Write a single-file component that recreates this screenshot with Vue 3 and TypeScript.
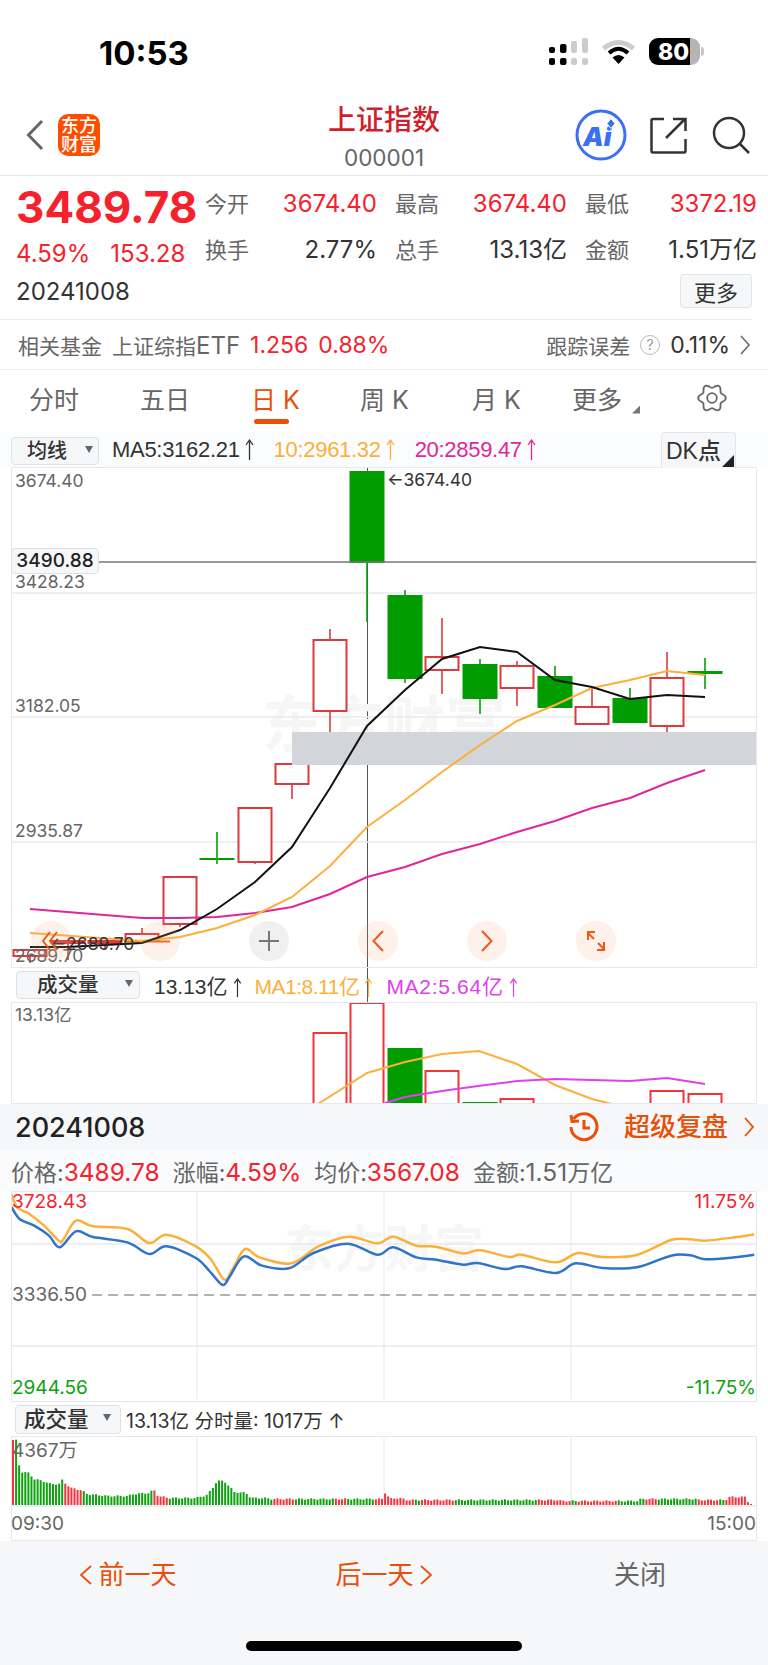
<template>
  <div class="page">
    <!-- Status bar -->
    <div class="status">
      <span class="clock">10:53</span>
      <div class="status-icons">
        <svg class="signal" width="39" height="27" viewBox="0 0 39 27">
          <rect x="0" y="9" width="6" height="6" rx="2" fill="#000" />
          <rect x="0" y="20" width="6" height="7" rx="2" fill="#000" />
          <rect x="11" y="6" width="6.5" height="9" rx="2" fill="#000" />
          <rect x="11" y="20" width="6.5" height="7" rx="2" fill="#000" />
          <rect x="22" y="3" width="6" height="12" rx="2" fill="#ccc" />
          <rect x="22" y="20" width="6" height="7" rx="2" fill="#ccc" />
          <rect x="33" y="0" width="6" height="15" rx="2" fill="#ccc" />
          <rect x="33" y="20" width="6" height="7" rx="2" fill="#ccc" />
        </svg>
        <svg class="wifi" width="35" height="25" viewBox="0 0 35 25">
          <path d="M2.5 9.5 Q17.5 -2.5 32.5 9.5" fill="none" stroke="#ccc" stroke-width="5" />
          <path d="M8 14 Q17.5 5.5 27 14" fill="none" stroke="#000" stroke-width="4" />
          <path d="M11.5 18.5 Q17.5 13.5 23.5 18.5 L17.5 25 Z" fill="#000" />
        </svg>
        <div class="battery"><span>80</span></div>
      </div>
    </div>

    <!-- Navigation -->
    <header class="nav">
      <div class="nav-left">
        <svg width="18" height="32" viewBox="0 0 18 32">
          <path d="M16 2 L2.5 16 L16 30" fill="none" stroke="#666" stroke-width="3" />
        </svg>
        <div class="logo">东方<br />财富</div>
      </div>
      <div class="nav-title">
        <h1>上证指数</h1>
        <span>000001</span>
      </div>
      <div class="nav-right">
        <svg class="ai-icon" width="52" height="52" viewBox="0 0 52 52">
          <circle cx="26" cy="26" r="24" fill="#fff" stroke="#3b6ff5" stroke-width="3" />
          <text x="8" y="37" class="ai-text">Ai</text>
          <path d="M36 9.5 L40 14.5 L36 19.5 L32 14.5 Z" fill="#3b6ff5" stroke="#fff" stroke-width="1" />
        </svg>
        <svg width="37" height="37" viewBox="0 0 37 37">
          <path d="M14 2 H3 a1.5 1.5 0 0 0 -1.5 1.5 V34 a1.5 1.5 0 0 0 1.5 1.5 H34 a1.5 1.5 0 0 0 1.5 -1.5 V22" fill="none" stroke="#333" stroke-width="2.5" />
          <path d="M16 21 L35 2 M23 2 H35.5 V14" fill="none" stroke="#333" stroke-width="2.5" />
        </svg>
        <svg width="38" height="38" viewBox="0 0 38 38">
          <circle cx="17" cy="17" r="15" fill="none" stroke="#333" stroke-width="2.5" />
          <path d="M28 28 L37 37" stroke="#333" stroke-width="2.5" />
        </svg>
      </div>
    </header>

    <!-- Quote -->
    <section class="quote">
      <div class="quote-main">
        <div class="quote-left">
          <div class="price">3489.78</div>
          <div class="change"><span>4.59%</span><span>153.28</span></div>
        </div>
        <div class="quote-grid">
          <div v-for="c in stats" :key="c.label" class="stat">
            <span class="stat-label">{{ c.label }}</span>
            <span class="stat-value" :class="{ red: c.red }">{{ c.value }}</span>
          </div>
        </div>
      </div>
      <div class="quote-date">
        <span>20241008</span>
        <button type="button" class="more-btn">更多</button>
      </div>
    </section>

    <div class="fund">
      <span class="fund-label">相关基金</span>
      <span class="fund-name">上证综指<i>ETF</i></span>
      <span class="fund-num red">1.256</span>
      <span class="fund-num red">0.88%</span>
      <span class="fund-err">跟踪误差</span>
      <span class="help">?</span>
      <span class="fund-num fund-val">0.11%</span>
      <svg width="10" height="20" viewBox="0 0 10 20">
        <path d="M1 1 L9 10 L1 19" fill="none" stroke="#666" stroke-width="1.5" />
      </svg>
    </div>

    <!-- Tabs -->
    <nav class="tabs">
      <span v-for="t in tabs" :key="t" class="tab" :class="{ active: t === '日 K' }">{{ t }}</span>
      <span class="tab tab-more">更多<i class="corner"></i></span>
      <svg class="gear" width="30" height="30" viewBox="0 0 30 30">
        <path :d="gearPath" fill="none" stroke="#666" stroke-width="1.8" />
        <circle cx="15" cy="15" r="4.8" fill="none" stroke="#666" stroke-width="1.8" />
      </svg>
    </nav>

    <div class="ma-row">
      <div class="select select-ma">均线<i class="tri"></i></div>
      <span class="ma-text ma-first">MA5:3162.21<svg class="arr" width="9" height="22" viewBox="0 0 9 22"><path d="M4.5 1 V21 M1 6 L4.5 1 L8 6" /></svg></span>
      <span class="ma-text orange">10:2961.32<svg class="arr" width="9" height="22" viewBox="0 0 9 22"><path d="M4.5 1 V21 M1 6 L4.5 1 L8 6" /></svg></span>
      <span class="ma-text pink">20:2859.47<svg class="arr" width="9" height="22" viewBox="0 0 9 22"><path d="M4.5 1 V21 M1 6 L4.5 1 L8 6" /></svg></span>
      <div class="dk">DK点<i class="corner dark"></i></div>
    </div>

    <!-- K line + volume -->
    <div class="kline">
      <div class="crosshair"></div>

      <div class="chart chart-main">
        <svg width="746" height="501" viewBox="11 467 746 501">
          <text x="262" y="747" class="watermark wm-big">东方财富</text>
          <path d="M11 593 H757 M11 717 H757 M11 842 H757" stroke="#e8ebf0" stroke-width="1.5" />

          <g v-for="k in candles" :key="k.x">
            <line
              :x1="k.x" :x2="k.x" :y1="k.high" :y2="k.low"
              :stroke="k.up ? '#dc3a3e' : '#0a9c0a'" stroke-width="1.6"
            />
            <rect
              v-if="k.up"
              :x="k.x - 16.5" :y="k.top" width="33" :height="k.bottom - k.top"
              fill="#fff" stroke="#dc3a3e" stroke-width="2"
            />
            <rect
              v-else
              :x="k.x - 17.5" :y="k.top" width="35" :height="k.bottom - k.top"
              fill="#009c00"
            />
          </g>
          <path d="M125 941.5 H170" stroke="#f0601e" stroke-width="2" />

          <rect x="292" y="732" width="465" height="33" fill="#d2d5da" />
          <path d="M99 562 H757" stroke="#777" stroke-width="1.5" />

          <polyline :points="ma20" fill="none" stroke="#e0269a" stroke-width="2" />
          <polyline :points="ma10" fill="none" stroke="#fbb03b" stroke-width="2" />
          <polyline :points="ma5" fill="none" stroke="#111" stroke-width="2" />

          <text x="15" y="487" class="axis">3674.40</text>
          <text x="15" y="588" class="axis">3428.23</text>
          <text x="15" y="712" class="axis">3182.05</text>
          <text x="15" y="837" class="axis">2935.87</text>
          <text x="15" y="962" class="axis">2689.70</text>
          <text x="387" y="486" class="axis dark">←3674.40</text>
          <text x="50" y="950" class="axis dark">←2689.70</text>
        </svg>

        <div class="cross-price">3490.88</div>

        <div class="chart-tools">
          <span class="tool">
            <svg width="20" height="20" viewBox="0 0 20 20">
              <path d="M9 1 L2 10 L9 19 M16 1 L9 10 L16 19" fill="none" stroke="#ee5a14" stroke-width="2" />
            </svg>
          </span>
          <span class="tool">
            <svg width="20" height="20" viewBox="0 0 20 20"></svg>
          </span>
          <span class="tool gray">
            <svg width="20" height="20" viewBox="0 0 20 20">
              <path d="M10 0 V20 M0 10 H20" stroke="#777" stroke-width="2" />
            </svg>
          </span>
          <span class="tool">
            <svg width="12" height="22" viewBox="0 0 12 22">
              <path d="M11 1 L1.5 11 L11 21" fill="none" stroke="#ee5a14" stroke-width="2" />
            </svg>
          </span>
          <span class="tool">
            <svg width="12" height="22" viewBox="0 0 12 22">
              <path d="M1 1 L10.5 11 L1 21" fill="none" stroke="#ee5a14" stroke-width="2" />
            </svg>
          </span>
          <span class="tool">
            <svg width="22" height="22" viewBox="0 0 22 22">
              <path d="M3 10 V2 H10 M2.5 2.5 L9 9 M19 12 V20 H12 M19.5 19.5 L13 13" fill="none" stroke="#ee5a14" stroke-width="2" />
            </svg>
          </span>
        </div>
      </div>

      <div class="vol-row">
        <div class="select select-vol">成交量<i class="tri"></i></div>
        <span class="vol-text">13.13亿<svg class="arr" width="9" height="20" viewBox="0 0 9 22"><path d="M4.5 1 V21 M1 6 L4.5 1 L8 6" /></svg></span>
        <span class="vol-text orange ma1">MA1:8.11亿<svg class="arr" width="9" height="20" viewBox="0 0 9 22"><path d="M4.5 1 V21 M1 6 L4.5 1 L8 6" /></svg></span>
        <span class="vol-text violet ma2">MA2:5.64亿<svg class="arr" width="9" height="20" viewBox="0 0 9 22"><path d="M4.5 1 V21 M1 6 L4.5 1 L8 6" /></svg></span>
      </div>

      <div class="chart chart-vol">
        <svg width="746" height="102" viewBox="11 1002 746 102">
          <g v-for="b in volBars" :key="b.x">
            <rect
              v-if="b.up"
              :x="b.x - 16.5" :y="b.top" width="33" height="120"
              fill="#fff" stroke="#f0353b" stroke-width="2"
            />
            <rect
              v-else
              :x="b.x - 17.5" :y="b.top" width="35" height="120"
              fill="#009c00"
            />
          </g>
          <polyline :points="volMa1" fill="none" stroke="#fbb03b" stroke-width="2" />
          <polyline :points="volMa2" fill="none" stroke="#e040e8" stroke-width="2" />
          <text x="15" y="1021" class="axis">13.13亿</text>
        </svg>
      </div>
    </div>

    <!-- Replay bar -->
    <div class="replay">
      <span class="replay-date">20241008</span>
      <div class="replay-link">
        <svg width="30" height="30" viewBox="0 0 30 30">
          <path d="M4.5 7 A13 13 0 1 1 2 15" fill="none" stroke="#e8500a" stroke-width="3" />
          <path d="M2 3 L3 9.5 L10 9" fill="none" stroke="#e8500a" stroke-width="3" />
          <path d="M15 8 V16 H21" fill="none" stroke="#e8500a" stroke-width="3" />
        </svg>
        <span>超级复盘</span>
        <svg width="10" height="20" viewBox="0 0 10 20">
          <path d="M1 1 L9 10 L1 19" fill="none" stroke="#e8500a" stroke-width="1.8" />
        </svg>
      </div>
    </div>

    <div class="info">
      <span>价格:<em class="up">3489.78</em></span>
      <span>涨幅:<em class="up">4.59%</em></span>
      <span>均价:<em class="up">3567.08</em></span>
      <span>金额:<em>1.51</em>万亿</span>
    </div>

    <!-- Time share -->
    <div class="chart chart-time">
      <svg width="746" height="210" viewBox="11 1192 746 210">
        <text x="284" y="1268" class="watermark wm-small">东方财富</text>
        <path d="M197 1192 V1400 M384 1192 V1400 M571 1192 V1400" stroke="#e3e7ee" stroke-width="1" />
        <path d="M11 1245 H757 M11 1347 H757" stroke="#e6e9f0" stroke-width="1.5" />
        <path d="M92 1296 H757" stroke="#999" stroke-width="1.5" stroke-dasharray="10 6" />
        <path :d="avgLine" fill="none" stroke="#fbb03b" stroke-width="2.5" />
        <path :d="priceLine" fill="none" stroke="#2f74c8" stroke-width="2.5" />
        <text x="12" y="1209" class="axis big red-fill">3728.43</text>
        <text x="756" y="1209" class="axis big red-fill end">11.75%</text>
        <text x="12" y="1302" class="axis big">3336.50</text>
        <text x="12" y="1395" class="axis big green-fill">2944.56</text>
        <text x="756" y="1395" class="axis big green-fill end">-11.75%</text>
      </svg>
    </div>

    <div class="vol2-row">
      <div class="select select-vol2">成交量<i class="tri"></i></div>
      <span>13.13亿 分时量: 1017万 ↑</span>
    </div>

    <div class="chart chart-bars">
      <svg width="746" height="104" viewBox="11 1436 746 104">
        <path d="M197 1438 V1505 M384 1438 V1505 M571 1438 V1505" stroke="#e3e7ee" stroke-width="1" />
        <rect
          v-for="b in minuteBars"
          :key="b.x"
          :x="b.x" :y="1505 - b.h" width="2" :height="b.h"
          :fill="b.up ? '#f5333f' : '#0ea20e'"
        />
        <path d="M11 1506 H757" stroke="#e6e9f0" stroke-width="1.5" />
        <text x="12" y="1457" class="axis big">4367万</text>
        <text x="11" y="1530" class="axis big">09:30</text>
        <text x="756" y="1530" class="axis big end">15:00</text>
      </svg>
    </div>

    <!-- Footer -->
    <footer class="footer">
      <div class="footer-btns">
        <span class="foot-btn">
          <svg width="13" height="20" viewBox="0 0 13 20">
            <path d="M12 1 L2 10 L12 19" fill="none" stroke="#e8500a" stroke-width="1.8" />
          </svg>
          前一天
        </span>
        <span class="foot-btn">
          后一天
          <svg width="13" height="20" viewBox="0 0 13 20">
            <path d="M1 1 L11 10 L1 19" fill="none" stroke="#e8500a" stroke-width="1.8" />
          </svg>
        </span>
        <span class="foot-btn close">关闭</span>
      </div>
      <div class="home"></div>
    </footer>
  </div>
</template>

<script setup lang="ts">
interface Stat {
  label: string
  value: string
  red?: boolean
}

interface Candle {
  x: number
  top: number
  bottom: number
  high: number
  low: number
  up: boolean
}

type Pt = [number, number]

const stats: Stat[] = [
  { label: '今开', value: '3674.40', red: true },
  { label: '最高', value: '3674.40', red: true },
  { label: '最低', value: '3372.19', red: true },
  { label: '换手', value: '2.77%' },
  { label: '总手', value: '13.13亿' },
  { label: '金额', value: '1.51万亿' },
]

const tabs = ['分时', '五日', '日 K', '周 K', '月 K']

const candles: Candle[] = [
  { x: 30, top: 950, bottom: 956, high: 950, low: 963, up: true },
  { x: 68, top: 941, bottom: 943, high: 941, low: 960, up: true },
  { x: 105, top: 941, bottom: 943, high: 941, low: 950, up: true },
  { x: 142, top: 934, bottom: 941, high: 928, low: 941, up: true },
  { x: 180, top: 877, bottom: 924, high: 877, low: 927, up: true },
  { x: 217, top: 858, bottom: 860, high: 832, low: 864, up: false },
  { x: 255, top: 808, bottom: 862, high: 808, low: 864, up: true },
  { x: 292, top: 764, bottom: 784, high: 764, low: 799, up: true },
  { x: 330, top: 640, bottom: 711, high: 629, low: 732, up: true },
  { x: 367, top: 471, bottom: 563, high: 471, low: 622, up: false },
  { x: 405, top: 595, bottom: 679, high: 590, low: 683, up: false },
  { x: 442, top: 657, bottom: 670, high: 618, low: 694, up: true },
  { x: 480, top: 664, bottom: 699, high: 659, low: 714, up: false },
  { x: 517, top: 666, bottom: 688, high: 661, low: 706, up: true },
  { x: 555, top: 676, bottom: 708, high: 666, low: 708, up: false },
  { x: 592, top: 707, bottom: 724, high: 687, low: 724, up: true },
  { x: 630, top: 698, bottom: 723, high: 688, low: 723, up: false },
  { x: 667, top: 678, bottom: 726, high: 652, low: 732, up: true },
  { x: 705, top: 671, bottom: 674, high: 658, low: 689, up: false },
]

const volBars = [
  { x: 330, top: 1033, up: true },
  { x: 367, top: 1003, up: true },
  { x: 405, top: 1048, up: false },
  { x: 442, top: 1071, up: true },
  { x: 480, top: 1102, up: false },
  { x: 517, top: 1099, up: true },
  { x: 667, top: 1091, up: true },
  { x: 705, top: 1094, up: true },
]

function toPoints(pts: Pt[]): string {
  return pts.map(p => p.join(',')).join(' ')
}

const ma5 = toPoints([
  [30, 947], [67, 947], [105, 945], [142, 943], [180, 930], [217, 909], [255, 882],
  [292, 847], [330, 788], [367, 726], [405, 690], [442, 659], [480, 647], [517, 652],
  [555, 680], [592, 687], [630, 699], [667, 695], [705, 697],
])

const ma10 = toPoints([
  [30, 933], [142, 941], [180, 937], [217, 928], [255, 915], [292, 897], [330, 866],
  [367, 827], [405, 800], [442, 772], [480, 745], [517, 721], [555, 705], [592, 688],
  [630, 680], [667, 671], [705, 675],
])

const ma20 = toPoints([
  [30, 909], [142, 918], [180, 918], [217, 917], [255, 913], [292, 907], [330, 894],
  [367, 877], [405, 867], [442, 854], [480, 844], [517, 832], [555, 821], [592, 808],
  [630, 798], [667, 783], [705, 770],
])

const volMa1 = toPoints([
  [318, 1104], [367, 1073], [405, 1062], [442, 1054], [479, 1051], [517, 1064],
  [555, 1085], [592, 1099], [612, 1104],
])

const volMa2 = toPoints([
  [385, 1103], [405, 1097], [442, 1091], [478, 1086], [517, 1081], [555, 1079],
  [630, 1081], [667, 1078], [705, 1084],
])

// values read off a 2.04 x 3 crop of the intraday chart
const avgRaw: Pt[] = [
  [23, 75], [35, 115], [60, 135], [90, 170], [120, 215], [130, 210], [155, 155], [190, 172],
  [260, 180], [305, 222], [340, 197], [400, 232], [430, 270], [458, 332], [475, 300], [500, 240],
  [530, 265], [595, 283], [650, 232], [712, 203], [770, 223], [803, 203], [850, 230], [890, 233],
  [945, 253], [980, 244], [1040, 264], [1065, 257], [1135, 280], [1180, 252], [1230, 264],
  [1300, 258], [1370, 213], [1410, 211], [1440, 215], [1500, 205], [1540, 196],
]

const priceRaw: Pt[] = [
  [23, 113], [40, 150], [70, 170], [100, 200], [122, 235], [155, 187], [190, 204], [260, 220],
  [305, 255], [340, 232], [400, 267], [430, 310], [455, 348], [470, 320], [498, 262], [535, 290],
  [590, 298], [640, 252], [710, 224], [770, 257], [803, 235], [850, 265], [890, 272], [945, 287],
  [975, 282], [1030, 300], [1065, 292], [1135, 312], [1175, 283], [1230, 297], [1300, 295],
  [1370, 260], [1410, 259], [1440, 271], [1500, 265], [1540, 257],
]

function smooth(raw: Pt[]): string {
  const pts = raw.map(([x, y]): Pt => [x / 2.0417, y / 3 + 1170])
  let d = `M${pts[0][0]} ${pts[0][1]}`
  for (let i = 0; i < pts.length - 1; i++) {
    const p0 = pts[Math.max(i - 1, 0)]
    const p1 = pts[i]
    const p2 = pts[i + 1]
    const p3 = pts[Math.min(i + 2, pts.length - 1)]
    const c1x = p1[0] + (p2[0] - p0[0]) / 6
    const c1y = p1[1] + (p2[1] - p0[1]) / 6
    const c2x = p2[0] - (p3[0] - p1[0]) / 6
    const c2y = p2[1] - (p3[1] - p1[1]) / 6
    d += ` C${c1x} ${c1y} ${c2x} ${c2y} ${p2[0]} ${p2[1]}`
  }
  return d
}

const avgLine = smooth(avgRaw)
const priceLine = smooth(priceRaw)

function buildGear(): string {
  const parts: string[] = []
  for (let i = 0; i <= 120; i++) {
    const t = (i / 120) * Math.PI * 2
    const r = 12 + 1.8 * Math.cos(6 * t)
    const x = (15 + r * Math.cos(t)).toFixed(2)
    const y = (15 + r * Math.sin(t)).toFixed(2)
    parts.push(`${i ? 'L' : 'M'}${x} ${y}`)
  }
  return parts.join(' ') + 'Z'
}

const gearPath = buildGear()

const envelope: Pt[] = [
  [12, 65], [15, 66], [18, 40], [21, 33], [28, 32], [33, 26], [42, 24], [50, 21], [60, 21],
  [61, 25], [64, 22], [70, 17], [80, 15], [86, 11], [107, 9], [127, 9], [133, 11], [147, 12],
  [153, 15], [157, 9], [168, 7], [195, 7], [206, 10], [211, 16], [216, 24], [223, 24], [228, 19],
  [233, 13], [245, 12], [250, 7], [265, 7], [270, 6], [382, 6], [385, 15], [388, 6], [398, 7],
  [406, 5], [558, 5], [560, 4], [636, 4], [640, 6], [695, 6], [697, 5], [725, 5], [727, 8],
  [745, 8], [748, 1], [751, 1], [754, 15],
]

function heightAt(x: number): number {
  for (let i = 0; i < envelope.length - 1; i++) {
    const [x0, h0] = envelope[i]
    const [x1, h1] = envelope[i + 1]
    if (x >= x0 && x <= x1) return h0 + ((h1 - h0) * (x - x0)) / (x1 - x0)
  }
  return 1
}

function isUp(x: number, i: number): boolean {
  if (x < 14) return true
  if (x < 62) return false
  if (x < 80) return true
  if (x < 152) return false
  if (x < 168) return true
  if (x < 264) return false
  if (x > 752) return false
  if (x > 725) return true
  return Math.sin(i * 0.37) + Math.sin(i * 0.11) > 0
}

const minuteBars = Array.from({ length: 241 }, (_, i) => {
  const x = 12 + i * 3.075
  const wobble = x < 20 ? 0 : Math.sin(i * 1.7) * 0.7
  return { x, h: Math.max(1, heightAt(x) + wobble), up: isUp(x, i) }
})
</script>

<style>
body {
  background: #fff;
}
</style>

<style scoped>
.page {
  width: 768px;
  height: 1665px;
  overflow: hidden;
  background: #fff;
  color: #333;
  font-family: Inter, "Noto Sans CJK SC", sans-serif;
}

.red {
  color: #f5222d;
}

.orange {
  color: #fbb03b;
}

.pink {
  color: #e0269a;
}

.violet {
  color: #e040e8;
}

.arr {
  margin-left: 5px;
  vertical-align: -4px;
}

.arr path {
  fill: none;
  stroke: currentColor;
  stroke-width: 1.3;
}

/* status bar */
.status {
  height: 90px;
  padding: 38px 68px 0 99px;
  box-sizing: border-box;
  display: flex;
  justify-content: space-between;
  align-items: flex-start;
}

.clock {
  font-size: 33px;
  line-height: 30px;
  font-weight: 700;
  color: #000;
}

.status-icons {
  display: flex;
  align-items: center;
  gap: 13px;
}

.battery {
  position: relative;
  width: 51px;
  height: 27px;
  margin-left: 0;
  border-radius: 9px;
  background: linear-gradient(90deg, #000 0, #000 41px, #b5b5b5 41px);
  display: flex;
  align-items: center;
  color: #fff;
  font-size: 23px;
  font-weight: 800;
  padding-left: 9px;
  box-sizing: border-box;
}

.battery::after {
  content: "";
  position: absolute;
  left: 52px;
  top: 9px;
  width: 3px;
  height: 9px;
  border-radius: 0 3px 3px 0;
  background: #c8c8c8;
}

/* nav */
.nav {
  position: relative;
  height: 86px;
  box-sizing: border-box;
  border-bottom: 1.5px solid #e8e8e8;
  display: flex;
  justify-content: space-between;
  padding: 10px 18px 0 26px;
}

.nav-left {
  display: flex;
  align-items: center;
  gap: 14px;
  height: 70px;
}

.logo {
  width: 42px;
  height: 42px;
  border-radius: 10px;
  background: #ff4d00;
  color: #fff;
  font-size: 18px;
  line-height: 19px;
  font-weight: 500;
  text-align: center;
  padding-top: 2px;
  box-sizing: border-box;
}

.nav-title {
  position: absolute;
  left: 0;
  right: 0;
  top: 11px;
  text-align: center;
  pointer-events: none;
}

.nav-title h1 {
  margin: 0;
  font-size: 28px;
  line-height: 38px;
  font-weight: 500;
  color: #d01f2c;
}

.nav-title span {
  display: block;
  margin-top: 6px;
  font-size: 22.5px;
  line-height: 26px;
  color: #666;
}

.nav-right {
  display: flex;
  align-items: center;
  gap: 25px;
  height: 70px;
}

.ai-icon {
  margin-right: -2px;
}

.ai-text {
  font-size: 26px;
  font-weight: 900;
  font-style: italic;
  fill: #3b6ff5;
}

/* quote */
.quote {
  height: 144px;
  margin: 0 16px 0 0;
  padding-left: 16px;
  padding-top: 8px;
  box-sizing: border-box;
  border-bottom: 1.5px solid #ececec;
}

.quote-main {
  display: flex;
}

.quote-left {
  flex: none;
  width: 189px;
}

.price {
  font-size: 44px;
  line-height: 46px;
  font-weight: 700;
  color: #f5222d;
}

.change {
  display: flex;
  gap: 20px;
  margin-top: 10px;
  font-size: 24px;
  line-height: 28px;
  color: #f5222d;
}

.quote-grid {
  flex: none;
  display: grid;
  grid-template-columns: repeat(3, 172px);
  column-gap: 18px;
  row-gap: 11px;
  padding-top: 2px;
}

.stat {
  display: flex;
  justify-content: space-between;
  align-items: center;
  font-size: 24px;
  line-height: 30px;
}

.stat-label {
  color: #666;
  font-size: 22px;
}

.quote-date {
  display: flex;
  justify-content: space-between;
  align-items: center;
  margin-top: 6px;
  font-size: 24px;
}

.more-btn {
  width: 72px;
  height: 34px;
  margin-right: 0;
  padding: 0;
  border: 1px solid #e2e4e8;
  border-radius: 4px;
  background: #f6f7f9;
  font-family: inherit;
  font-size: 22px;
  color: #333;
}

/* fund row */
.fund {
  height: 50px;
  box-sizing: border-box;
  border-bottom: 1.5px solid #ececec;
  padding: 0 18px;
  display: flex;
  align-items: center;
  gap: 10px;
  font-size: 21px;
  color: #666;
}

.fund-name i {
  font-style: normal;
  font-size: 24px;
}

.fund-num {
  font-size: 23px;
}

.fund-err {
  margin-left: auto;
}

.help {
  width: 18px;
  height: 18px;
  border: 1px solid #bbb;
  border-radius: 50%;
  color: #999;
  font-size: 14px;
  line-height: 18px;
  text-align: center;
}

.fund-val {
  color: #333;
}

/* tabs */
.tabs {
  height: 62px;
  box-sizing: border-box;
  padding-left: 29px;
  display: grid;
  grid-template-columns: 111px 111px 109px 112px 100px 125px 30px;
  align-items: center;
  font-size: 25px;
  color: #666;
}

.tab {
  position: relative;
  line-height: 36px;
  margin-top: -3px;
  white-space: nowrap;
}

.tab.active {
  color: #e8500a;
}

.tab.active::after {
  content: "";
  position: absolute;
  left: 3px;
  top: 37px;
  width: 35px;
  height: 5px;
  border-radius: 3px;
  background: #e8500a;
}

.corner {
  position: absolute;
  left: 60px;
  top: 24px;
  width: 8px;
  height: 8px;
  background: #777;
  clip-path: polygon(100% 0, 100% 100%, 0 100%);
}

.gear {
  margin-top: -6px;
}

/* ma row */
.ma-row {
  position: relative;
  z-index: 2;
  height: 35px;
  display: flex;
  align-items: center;
  background: #fbfcfd;
  padding-left: 11px;
}

.select {
  position: relative;
  box-sizing: border-box;
  border: 1px solid #dfe1e5;
  border-radius: 4px;
  background: #f6f7f9;
  color: #333;
  font-weight: 500;
}

.select .tri {
  position: absolute;
  width: 0;
  height: 0;
  border: 4px solid transparent;
  border-top: 7px solid #666;
  border-bottom: 0;
  top: 50%;
  margin-top: -5px;
}

.select-ma {
  width: 88px;
  height: 28px;
  margin-top: 2px;
  padding-left: 15px;
  font-size: 20px;
  line-height: 26px;
}

.select-ma .tri {
  right: 5px;
}

.ma-text {
  font-family: "Liberation Sans", "Noto Sans CJK SC", sans-serif;
  font-size: 22px;
  letter-spacing: -0.3px;
  color: #333;
  white-space: nowrap;
}

.ma-text.orange {
  margin-left: 20px;
  color: #fbb03b;
}

.ma-text.pink {
  margin-left: 20px;
  color: #e0269a;
}

.ma-first {
  margin-left: 13px;
}

.dk {
  position: absolute;
  left: 661px;
  top: 0;
  width: 75px;
  height: 36px;
  box-sizing: border-box;
  border: 1px solid #e3e5e8;
  border-bottom: 0;
  border-radius: 4px 4px 0 0;
  background: #f6f7f9;
  padding-left: 4px;
  font-family: "Liberation Sans", "Noto Sans CJK SC", sans-serif;
  font-size: 23px;
  line-height: 36px;
  font-weight: 500;
  color: #333;
  white-space: nowrap;
}

.corner.dark {
  left: 60px;
  top: 22px;
  width: 12px;
  height: 12px;
  background: #222;
}

/* charts */
.kline {
  position: relative;
}

.crosshair {
  position: absolute;
  left: 366.5px;
  top: 0;
  bottom: 0;
  width: 1.2px;
  background: #555;
}

.chart {
  position: relative;
  z-index: 1;
  width: 746px;
  margin-left: 11px;
  box-sizing: border-box;
}

.chart svg {
  display: block;
}

.chart-main {
  height: 501px;
  outline: 1px solid #e6e8eb;
  outline-offset: -1px;
}

.watermark {
  font-family: "Noto Sans CJK SC", sans-serif;
  font-weight: 700;
  fill: #f6f6f6;
}

.wm-big {
  font-size: 61px;
}

.wm-small {
  font-size: 50px;
}

.axis {
  font-family: Inter, "Noto Sans CJK SC", sans-serif;
  font-size: 17.5px;
  fill: #666;
}

.axis.big {
  font-size: 19px;
}

.axis.dark {
  fill: #333;
}

.axis.end {
  text-anchor: end;
}

.red-fill {
  fill: #f5222d;
}

.green-fill {
  fill: #0ea20e;
}

.cross-price {
  position: absolute;
  left: 0;
  top: 81px;
  width: 88px;
  height: 26px;
  box-sizing: border-box;
  border: 1px solid #dfe1e5;
  border-radius: 4px;
  background: #f6f7f9;
  font-size: 19px;
  font-weight: 500;
  line-height: 24px;
  text-align: center;
  color: #222;
}

.chart-tools {
  position: absolute;
  left: 20px;
  top: 454px;
  display: flex;
  gap: 69px;
}

.tool {
  width: 40px;
  height: 40px;
  border-radius: 50%;
  background: rgba(248, 170, 120, 0.16);
  display: flex;
  align-items: center;
  justify-content: center;
}

.tool.gray {
  background: #f0f0f0;
}

.vol-row {
  position: relative;
  z-index: 1;
  height: 34px;
  display: flex;
  align-items: center;
  padding-left: 16px;
  font-family: "Liberation Sans", "Noto Sans CJK SC", sans-serif;
  font-size: 21px;
  color: #333;
}

.select-vol {
  width: 124px;
  height: 28px;
  padding-left: 20px;
  margin-right: 14px;
  font-family: Inter, "Noto Sans CJK SC", sans-serif;
  font-size: 20.5px;
  line-height: 26px;
}

.select-vol .tri {
  right: 6px;
}

.vol-text {
  margin-right: 13px;
  white-space: nowrap;
}

.vol-text.ma1 {
  letter-spacing: -0.5px;
}

.vol-text.ma2 {
  letter-spacing: 0.7px;
}

.chart-vol {
  height: 102px;
  overflow: hidden;
  outline: 1px solid #e6e8eb;
  outline-offset: -1px;
}

/* replay */
.replay {
  height: 46px;
  background: #f6f7f9;
  padding: 0 14px 0 15px;
  display: flex;
  align-items: center;
  justify-content: space-between;
}

.replay-date {
  font-size: 27px;
  font-weight: 500;
  color: #222;
}

.replay-link {
  display: flex;
  align-items: center;
  gap: 10px;
  color: #e8500a;
  font-size: 26px;
  font-weight: 500;
  line-height: 30px;
}

.replay-link span {
  margin: 0 6px 0 15px;
}

.info {
  height: 41px;
  box-sizing: border-box;
  background: #fafbfc;
  padding-left: 11px;
  display: flex;
  align-items: center;
  gap: 13px;
  font-size: 23px;
  color: #666;
  white-space: nowrap;
}

.info em {
  font-style: normal;
  font-size: 24.5px;
}

.info em.up {
  color: #f5222d;
}

.chart-time {
  height: 211px;
  outline: 1px solid #e6e8eb;
  outline-offset: -1px;
}

.vol2-row {
  height: 34px;
  display: flex;
  align-items: center;
  padding-left: 15px;
  gap: 5px;
  font-size: 19.5px;
  color: #333;
}

.select-vol2 {
  width: 106px;
  height: 29px;
  padding-left: 8px;
  font-size: 21.5px;
  line-height: 27px;
}

.select-vol2 .tri {
  right: 9px;
}

.chart-bars {
  height: 105px;
  outline: 1px solid #e6e8eb;
  outline-offset: -1px;
}

/* footer */
.footer {
  height: 124px;
  background: #f6f7f9;
  position: relative;
}

.footer-btns {
  display: grid;
  grid-template-columns: repeat(3, 256px);
  padding-top: 19px;
}

.foot-btn {
  display: flex;
  justify-content: center;
  align-items: center;
  gap: 6px;
  color: #e8500a;
  font-size: 26px;
  line-height: 30px;
}

.foot-btn.close {
  color: #666;
}

.home {
  position: absolute;
  left: 246px;
  top: 100px;
  width: 276px;
  height: 10px;
  border-radius: 5px;
  background: #000;
}
</style>
